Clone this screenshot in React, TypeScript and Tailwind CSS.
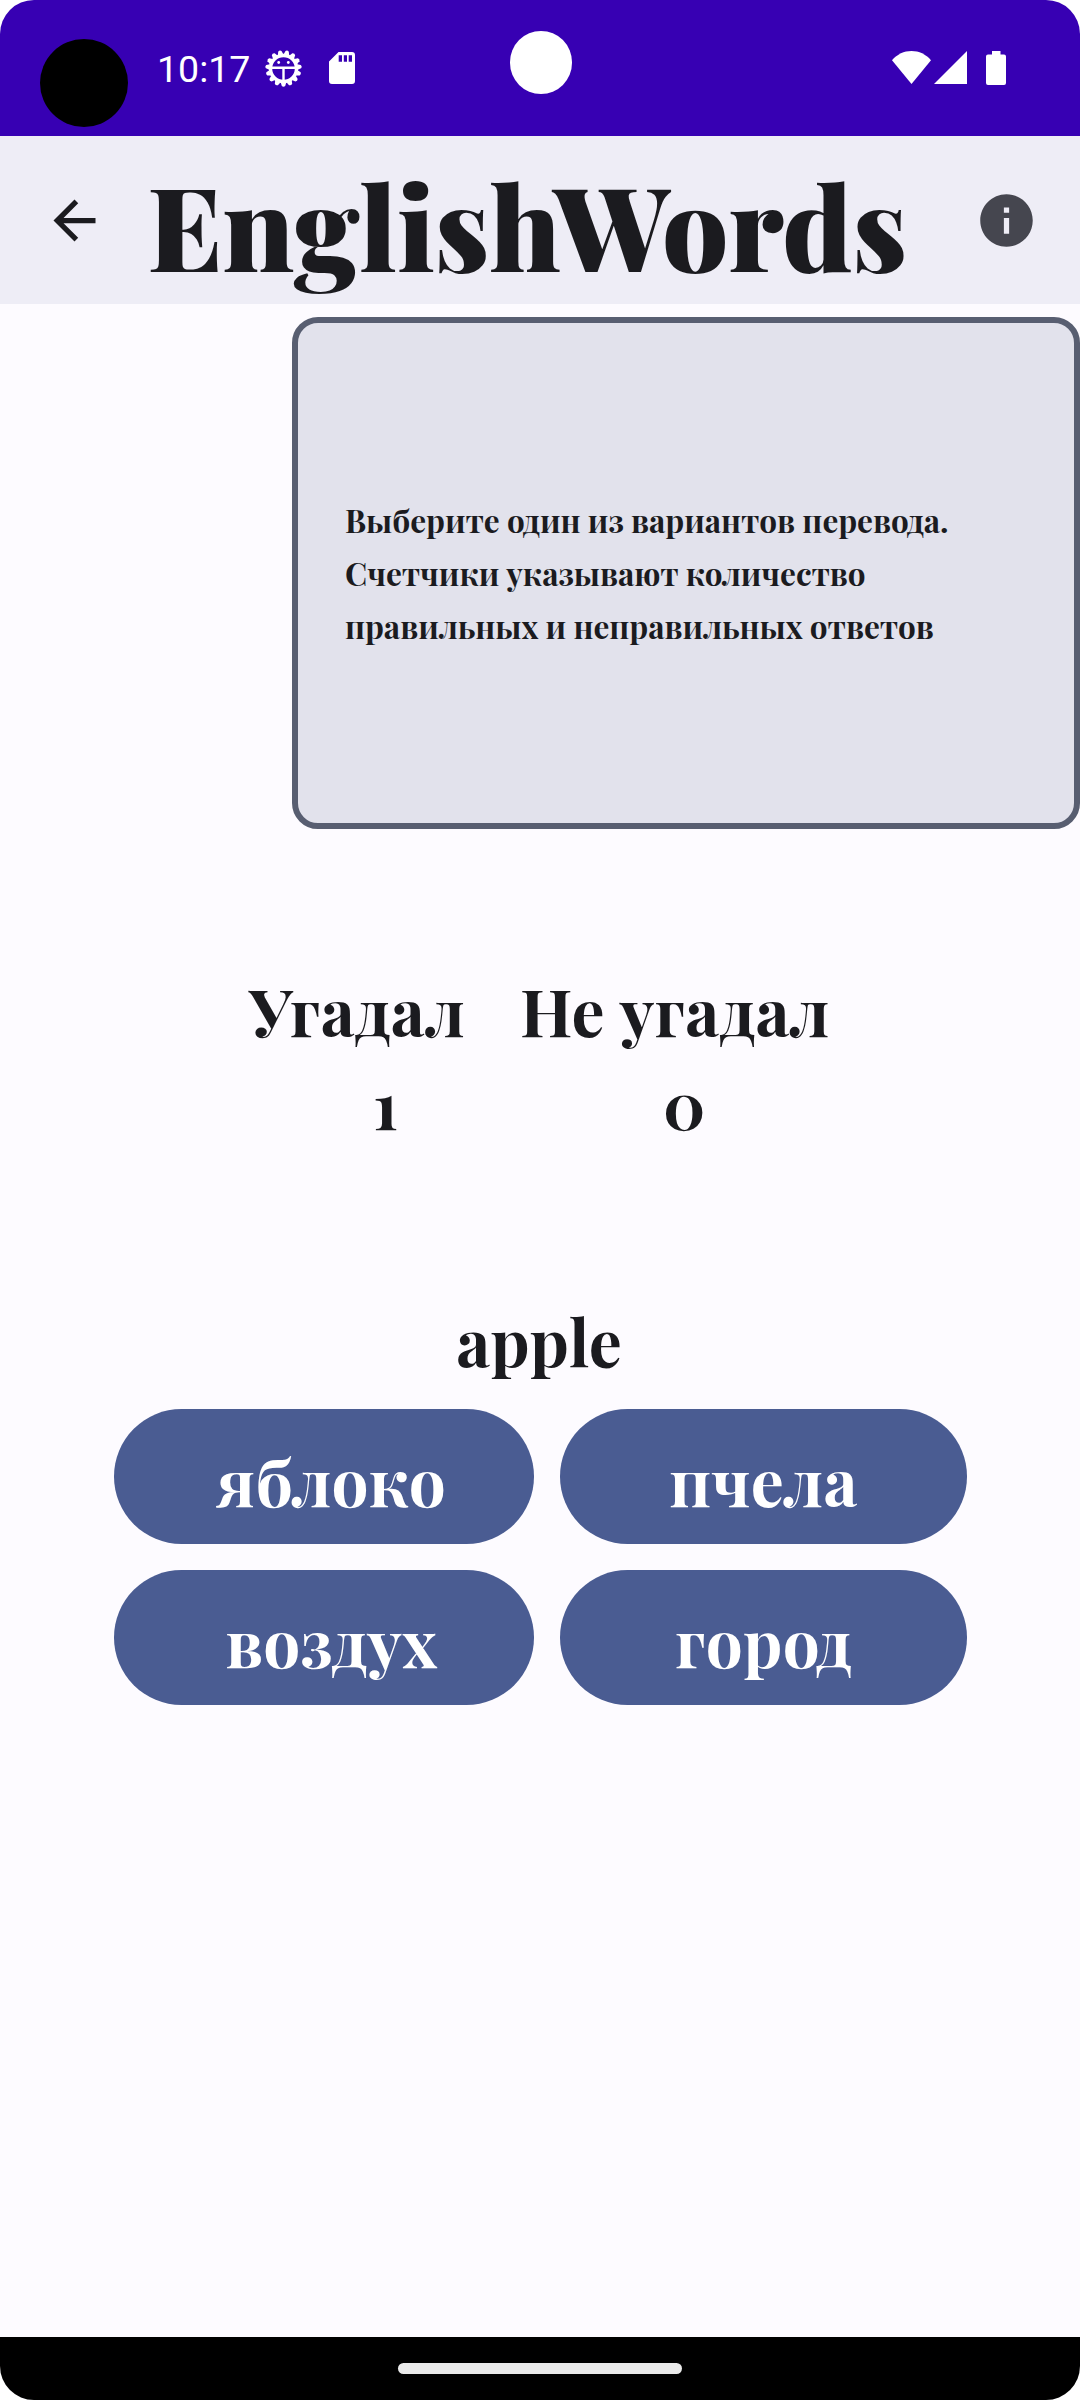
import React from 'react';

function BugIcon() {
  const teeth = Array.from({ length: 15 }, (_, i) => i * 24);
  return (
    <svg className="h-[37px] w-[37px]" viewBox="-18.5 -18.5 37 37" fill="none" stroke="#fff">
      <circle r="13" strokeWidth="3.4" />
      {teeth.map((a) => (
        <path key={a} d="M-2.800 -14 L-1.700 -17.500 Q0 -19 1.700 -17.500 L2.800 -14 Z" fill="#fff" stroke="none" transform={`rotate(${a + 12})`} />
      ))}
      <path d="M-13 -0.800 H13 M0 0 V13" strokeWidth="2.400" />
      <circle cx="-4.800" cy="-6" r="1.400" fill="#fff" stroke="none" />
      <circle cx="4.800" cy="-6" r="1.400" fill="#fff" stroke="none" />
    </svg>
  );
}

function StatusBar() {
  return (
    <div className="relative flex h-[136px] items-start bg-[#3700B3]">
      <div className="mt-[39px] ml-10 h-[88px] w-[88px] shrink-0 rounded-full bg-black" />
      <span className="mt-[47px] ml-[29px] w-[92px] font-[Roboto,sans-serif] text-[37.5px] leading-[44px] font-normal whitespace-nowrap text-white">
        10:17
      </span>
      <div className="mt-[49.5px] ml-[16px]">
        <BugIcon />
      </div>
      <svg className="mt-[52px] ml-[27px] h-8 w-[26px]" viewBox="0 0 26 32">
        <path fill="#fff" fillRule="evenodd" d="M9.500 0H23a3 3 0 0 1 3 3V29a3 3 0 0 1-3 3H3a3 3 0 0 1-3-3V9.500ZM9.700 3.200V9.800H13V3.200ZM14.800 3.200V9.800H18V3.200ZM19.700 3.200V9.800H23V3.200Z" />
      </svg>
      <div className="absolute top-[31px] left-[509.5px] h-[63px] w-[62px] rounded-full bg-white" />
      <div className="mt-[51px] mr-[74px] ml-auto flex items-start">
        <svg className="h-[33px] w-[39px]" viewBox="0 0 39 33">
          <path fill="#fff" d="M0 9.200C5.200 3.200 12 0 19.500 0S33.800 3.200 39 9.200L19.500 33Z" />
        </svg>
        <svg className="ml-[3px] h-[33px] w-[33px]" viewBox="0 0 33 33">
          <path fill="#fff" d="M33 0V33H0Z" />
        </svg>
        <svg className="ml-[19px] h-[34px] w-5" viewBox="0 0 20 34">
          <path fill="#fff" d="M6 0H14.500V3.400H18Q20 3.400 20 5.400V32Q20 34 18 34H2Q0 34 0 32V5.400Q0 3.400 2 3.400H6Z" />
        </svg>
      </div>
    </div>
  );
}

function TopBar() {
  return (
    <div className="flex h-[168px] items-center bg-[#EEEDF6]">
      <svg className="ml-[42.5px] h-[63px] w-[63px]" viewBox="0 0 24 24" fill="#1B1B1F">
        <path d="M20 11H7.830l5.590-5.590L12 4l-8 8 8 8 1.410-1.410L7.830 13H20v-2z" />
      </svg>
      <h1 className="ml-[42px] pt-[10px] text-[115.5px] leading-none font-black tracking-[-0.25px] whitespace-nowrap">
        EnglishWords
      </h1>
      <svg className="mr-[42px] ml-auto h-[63px] w-[63px]" viewBox="0 0 24 24" fill="#45464F">
        <path d="M12 2C6.480 2 2 6.480 2 12s4.480 10 10 10 10-4.480 10-10S17.520 2 12 2zm1 15h-2v-6h2v6zm0-8h-2V7h2v2z" />
      </svg>
    </div>
  );
}

const answers = ['яблоко', 'пчела', 'воздух', 'город'];

export default function App() {
  return (
    <div className="bg-white">
      <div className="flex h-[2400px] w-[1080px] flex-col overflow-hidden rounded-[34px] bg-[#FDFBFF] font-['Playfair_Display','Liberation_Serif',serif] text-[65.625px] leading-[66px] font-bold text-[#1B1B1F]">
        <StatusBar />
        <TopBar />
        <div className="mt-[13px] ml-auto flex h-[512px] w-[788px] items-center rounded-[26px] border-[6px] border-[#585E71] bg-[#E2E2EC] pl-[47px]">
          <p className="text-[31.5px] leading-[53px] tracking-[-0.05px] whitespace-nowrap">
            Выберите один из вариантов перевода.
            <br />
            Счетчики указывают количество
            <br />
            правильных и неправильных ответов
          </p>
        </div>
        <div className="mt-[148px] ml-[249px] flex gap-[55px] tracking-[0.2px]">
          <div className="w-[216px] whitespace-nowrap">
            <div>Угадал</div>
            <div className="mt-[27px] pl-[124px]">1</div>
          </div>
          <div className="w-[309px] whitespace-nowrap">
            <div>Не угадал</div>
            <div className="mt-[27px] pl-[143px]">0</div>
          </div>
        </div>
        <div className="mt-[171px] pr-[2px] text-center">apple</div>
        <div className="mt-[36px] ml-[114px] grid grid-cols-[420px_407px] gap-[26px]">
          {answers.map((word) => (
            <button
              key={word}
              className="flex h-[135px] items-center justify-center rounded-full bg-[#4A5C92] pt-[6px] tracking-[0.26px] text-white odd:pl-[15px]"
            >
              {word}
            </button>
          ))}
        </div>
        <div className="mt-auto flex h-[63px] items-start justify-center bg-black pt-[26px]">
          <div className="h-[11px] w-[284px] rounded-full bg-[#EAEAEA]" />
        </div>
      </div>
    </div>
  );
}
